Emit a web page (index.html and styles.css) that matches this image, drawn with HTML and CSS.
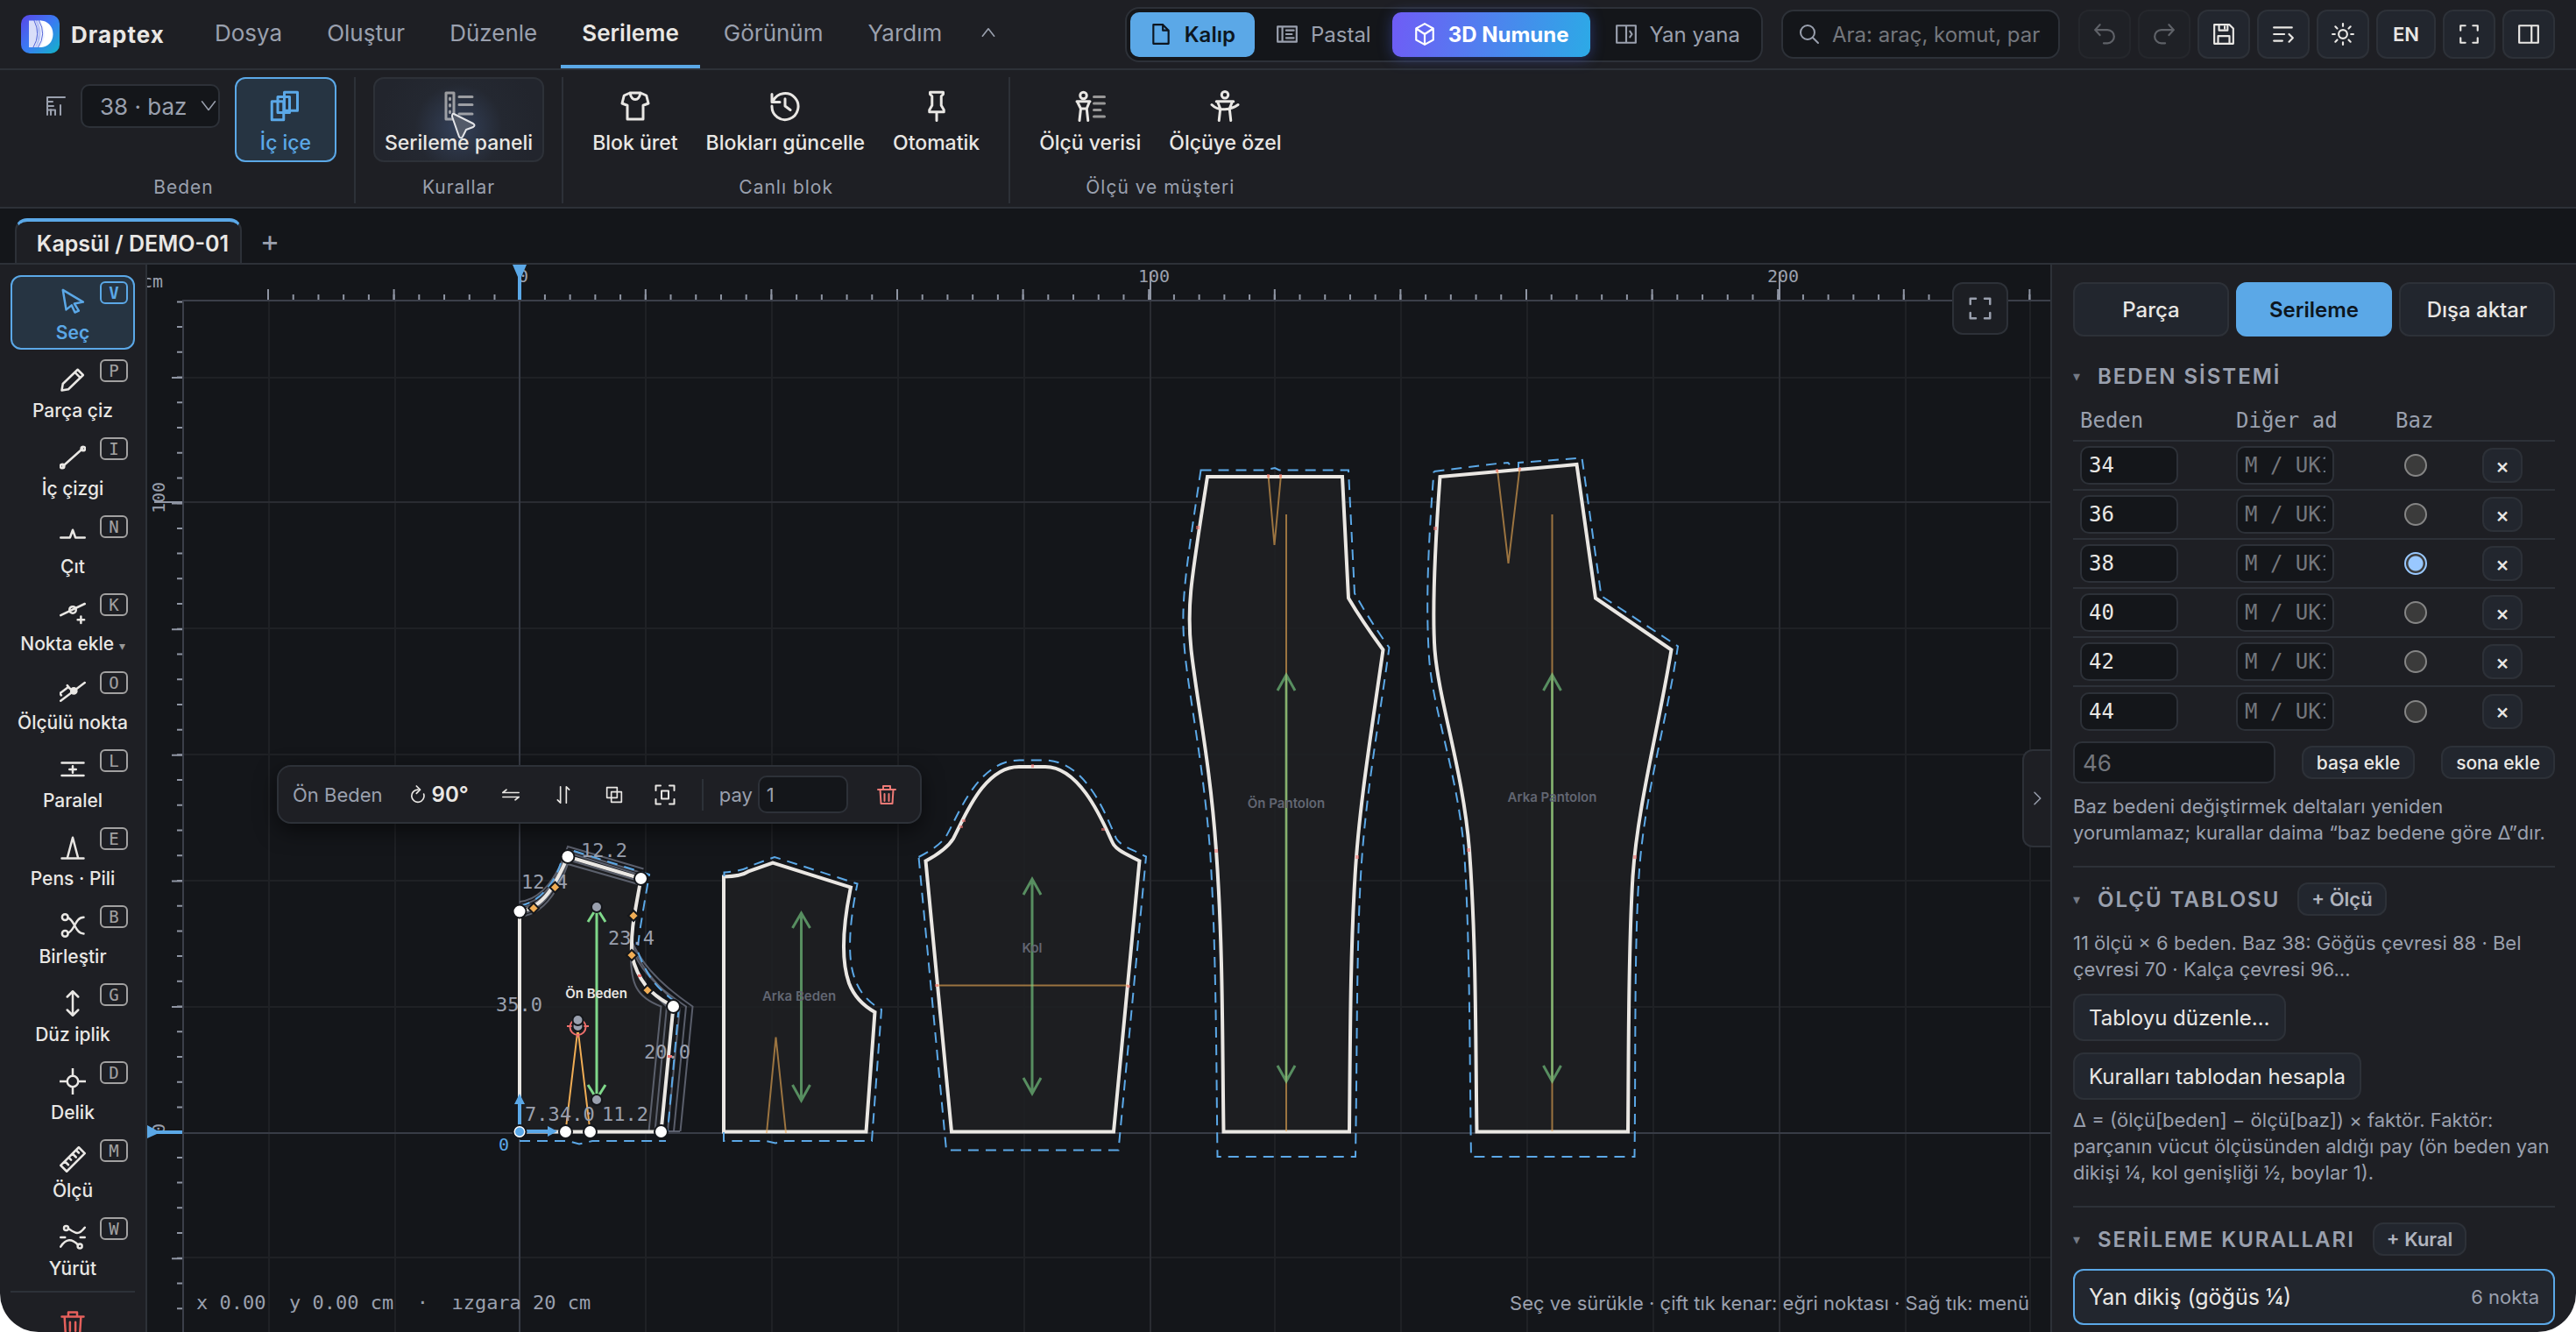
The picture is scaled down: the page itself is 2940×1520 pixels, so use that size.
FILE: index.html
```html
<!DOCTYPE html>
<html lang="tr">
<head>
<meta charset="utf-8">
<title>Draptex</title>
<link rel="stylesheet" href="styles.css">
</head>
<body>
<svg class="sprite" aria-hidden="true">
  <symbol id="i-up" viewBox="0 0 24 24"><path d="M4 17l8-10 8 10"/></symbol>
  <symbol id="i-file" viewBox="0 0 24 24"><path d="M4 2h10l6 6v14H4zM14 2v6h6"/></symbol>
  <symbol id="i-marker" viewBox="0 0 24 24"><path d="M2 4h20v16H2zM7 4v16M11 8h8M11 12h6M11 16h8"/></symbol>
  <symbol id="i-cube" viewBox="0 0 24 24"><path d="M12 1l9 5v12l-9 5-9-5V6zM3 6l9 6 9-6M12 12v11"/></symbol>
  <symbol id="i-split" viewBox="0 0 24 24"><path d="M2 3h20v18H2zM12 3v18M16 9l2 3-2 3"/></symbol>
  <symbol id="i-search" viewBox="0 0 24 24"><circle cx="10" cy="10" r="8"/><path d="M16 16l6 6"/></symbol>
  <symbol id="i-undo" viewBox="0 0 24 24"><path d="M7 2L2 7.500l5 5.500M2 7.500h13a6.800 6.800 0 0 1 0 14h-4"/></symbol>
  <symbol id="i-redo" viewBox="0 0 24 24"><path d="M17 2l5 5.500-5 5.500M22 7.500H9a6.800 6.800 0 0 0 0 14h4"/></symbol>
  <symbol id="i-save" viewBox="0 0 24 24"><path d="M2 2h16l4 4v16H2zM7 2v6h9V2M6 22v-8h12v8M13 4v2"/></symbol>
  <symbol id="i-lines" viewBox="0 0 24 24"><path d="M2 5h19M2 12h11M2 19h9M18 12l4 4-4 4"/></symbol>
  <symbol id="i-sun" viewBox="0 0 24 24"><circle cx="12" cy="12" r="4.500"/><path d="M12 1v2.500M12 20.500V23M1 12h2.500M20.500 12H23M4 4l2 2M18 18l2 2M4 20l2-2M18 6l2-2"/></symbol>
  <symbol id="i-full" viewBox="0 0 24 24"><path d="M3 8V3h5M16 3h5v5M21 16v5h-5M8 21H3v-5"/></symbol>
  <symbol id="i-panel" viewBox="0 0 24 24"><path d="M2 3h20v18H2zM15 3v18"/></symbol>
  <symbol id="i-sizes" viewBox="0 0 24 24"><path d="M2 22V2h20M2 7h6M2 12h7M6 22v-6M11 22v-5M17 22V11M2 16.500h9V22"/></symbol>
  <symbol id="i-down" viewBox="0 0 24 24"><path d="M2 5l10 13L22 5"/></symbol>
  <symbol id="i-nest" viewBox="0 0 24 24"><path d="M1.500 8.500h9v14h-9zM6 5h9v12H6zM11 1.500h10v14H11z"/></symbol>
  <symbol id="i-rules" viewBox="0 0 24 24"><path d="M2 2h6v20H2zM12 5h10M12 11h10M12 18h10M5 6v1M5 11v1M5 16v1"/></symbol>
  <symbol id="i-shirt" viewBox="0 0 24 24"><path d="M8 2h8l4.500 2L22 10l-4 1.500V22H6V11.500L2 10l1.500-6zM8 2q1 5 4 5t4-5"/></symbol>
  <symbol id="i-history" viewBox="0 0 24 24"><path d="M2 3v6h6M3 8a10 10 0 1 1-1 4M12 6.500V12l4 3"/></symbol>
  <symbol id="i-pin" viewBox="0 0 24 24"><path d="M7 1.500h10v1.500l-1.500 1.500v7L17.500 15v1.500h-11V15l2-3.500v-7L7 3zM12 16.500V23"/></symbol>
  <symbol id="i-bodydata" viewBox="0 0 24 24"><circle cx="7" cy="4" r="2.500"/><path d="M2 8.500h10M2.500 9l2.500 5-1 9M11.500 9L9.500 14l1 9M5 14h4.500"/><path class="dim" d="M15 5h8M15 10h8M15 15h5M15 20h8"/></symbol>
  <symbol id="i-bodyfit" viewBox="0 0 24 24"><circle cx="12" cy="3.500" r="2.500"/><path d="M5.500 8.500h13M6.500 9l2 5-1 9M17.500 9l-2 5 1 9M2 11q4 4 10 3.500T22 11"/></symbol>
  <symbol id="i-select" viewBox="0 0 24 24"><path d="M3 1.500l18.500 11-8 1.500 4 6.500-3.500 1.500-3-6.500-5 4z"/></symbol>
  <symbol id="i-pencil" viewBox="0 0 24 24"><path d="M2 22l1-6L16.500 3l5 5L8 21zM14 5.500l5 5"/></symbol>
  <symbol id="i-line" viewBox="0 0 24 24"><path d="M3 20L21 4"/><circle cx="2.500" cy="20" r="1.800"/><circle cx="21.500" cy="4" r="1.800"/></symbol>
  <symbol id="i-notch" viewBox="0 0 24 24"><path d="M1 14h8.500L12 7l2.500 7H23"/></symbol>
  <symbol id="i-addpt" viewBox="0 0 24 24"><path d="M1 14.500L23 4M19.500 15.500v6M16.500 18.500h6"/><circle cx="12" cy="9.500" r="3"/></symbol>
  <symbol id="i-measpt" viewBox="0 0 24 24"><path d="M1 20.500L23 4M0 14l8-6M-1 12.500l2.500 3M7 6.500l2.500 3"/><circle cx="13" cy="11.500" r="2.500" class="solid"/></symbol>
  <symbol id="i-parallel" viewBox="0 0 24 24"><path d="M2 6h20M2 17.500h20M12 9v6M9 12h6"/></symbol>
  <symbol id="i-dart" viewBox="0 0 24 24"><path d="M2 22h20M7 22l5-19 5 19"/></symbol>
  <symbol id="i-join" viewBox="0 0 24 24"><circle cx="5" cy="4.500" r="2.700"/><circle cx="5" cy="19.500" r="2.700"/><path d="M7.500 5C14 7 14 19.500 22 19.500M7.500 19C14 17 14 4.500 22 4.500"/></symbol>
  <symbol id="i-grain" viewBox="0 0 24 24"><path d="M12 1v22M7 6l5-5 5 5M7 18l5 5 5-5"/></symbol>
  <symbol id="i-drill" viewBox="0 0 24 24"><circle cx="12" cy="12" r="5"/><path d="M12 0v7M12 17v7M0 12h7M17 12h7"/></symbol>
  <symbol id="i-ruler" viewBox="0 0 24 24"><path d="M1 17.500L17.500 1 23 6.500 6.500 23zM5 14l3 3M8.500 10.500l2 2M12 7l3 3M15.500 4l2 2"/></symbol>
  <symbol id="i-walk" viewBox="0 0 24 24"><circle cx="6" cy="3.500" r="2"/><path d="M8 4c6 4 9 7 15-1M1 12h4M19 12h4M1 20.500C6 13 11 13 17 19"/><circle cx="18.500" cy="20" r="2"/></symbol>
  <symbol id="i-trash" viewBox="0 0 24 24"><path d="M2 6h20M8 6V2h8v4M4.500 6l1 16h13l1-16M9.500 11v8M14.500 11v8"/></symbol>
  <symbol id="i-fliph" viewBox="0 0 24 24"><path d="M1 9h22M1 9l5-4M1 15h22M23 15l-5 4"/></symbol>
  <symbol id="i-flipv" viewBox="0 0 24 24"><path d="M8 1v22M8 23l-4-4M16 1v22M16 1l4 4"/></symbol>
  <symbol id="i-copy" viewBox="0 0 24 24"><path d="M2 2h14v14H2zM8 8h14v14H8z"/></symbol>
  <symbol id="i-fit" viewBox="0 0 24 24"><path d="M1.500 7V1.500H7M17 1.500h5.500V7M22.500 17v5.500H17M7 22.500H1.500V17M8 7.500h8v9H8z"/></symbol>
  <symbol id="i-right" viewBox="0 0 24 24"><path d="M8 3l9 9-9 9"/></symbol>
</svg>

<div class="app">
  <header class="topbar">
    <a class="brand" href="#">
      <svg class="logo" viewBox="0 0 44 44" aria-hidden="true">
        <defs>
          <linearGradient id="lg" x1="0" y1="0" x2="1" y2="1"><stop offset="0" stop-color="#5a45e8"/><stop offset=".5" stop-color="#3a7bf2"/><stop offset="1" stop-color="#12b5c8"/></linearGradient>
        </defs>
        <rect width="44" height="44" rx="10" fill="url(#lg)"/>
        <path d="M9 6.500h8q6 15 0 30.500H9z" fill="#d9def9"/>
        <path d="M16 6.500h4q7 15.500 0 30.500h-4q8-15 0-30.500z" fill="#bcc6f5"/>
        <path d="M19 6.500h4q8 15.500 0 30.500h-5q8.500-15 1-30.500z" fill="#eef1ff"/>
        <path d="M22 6.500c8 0 14.500 6 14.500 15.500S30 37 22 37q9-15 0-30.500z" fill="#fff"/>
        <path d="M15 6.500q8 15.500-1 30.500M20.500 6.500q9 15.500-1 30.500" fill="none" stroke="#5567d8" stroke-width="1"/>
      </svg>
      <span>Draptex</span>
    </a>
    <nav class="menu">
      <button>Dosya</button><button>Oluştur</button><button>Düzenle</button><button class="on">Serileme</button><button>Görünüm</button><button>Yardım</button><button class="fold" aria-label="Şeridi daralt"><svg><use href="#i-up"/></svg></button>
    </nav>
    <div class="modes">
      <button class="kalip"><svg><use href="#i-file"/></svg>Kalıp</button>
      <button class="pastal"><svg><use href="#i-marker"/></svg>Pastal</button>
      <button class="three"><svg><use href="#i-cube"/></svg>3D Numune</button>
      <button class="side"><svg><use href="#i-split"/></svg>Yan yana</button>
    </div>
    <label class="search"><svg><use href="#i-search"/></svg><input type="text" aria-label="Ara" placeholder="Ara: araç, komut, parça…"></label>
    <div class="actions">
      <button disabled aria-label="Geri al"><svg><use href="#i-undo"/></svg></button>
      <button disabled aria-label="Yinele"><svg><use href="#i-redo"/></svg></button>
      <button aria-label="Kaydet"><svg><use href="#i-save"/></svg></button>
      <button aria-label="Komutlar"><svg><use href="#i-lines"/></svg></button>
      <button aria-label="Tema"><svg><use href="#i-sun"/></svg></button>
      <button class="lang">EN</button>
      <button aria-label="Tam ekran"><svg><use href="#i-full"/></svg></button>
      <button aria-label="Panel"><svg><use href="#i-panel"/></svg></button>
    </div>
  </header>

  <div class="ribbon">
    <section class="group first">
      <div class="tools">
        <label class="size"><svg><use href="#i-sizes"/></svg><span class="pick"><select aria-label="Beden"><option>38 · baz</option></select><svg><use href="#i-down"/></svg></span></label>
        <button class="tool on"><svg><use href="#i-nest"/></svg>İç içe</button>
      </div>
      <h2>Beden</h2>
    </section>
    <section class="group">
      <div class="tools"><button class="tool hover"><svg class="dim"><use href="#i-rules"/></svg>Serileme paneli
        <svg class="cursor" viewBox="0 0 30 32"><path d="M4 2l22 11q3 2 0 4l-8 3-4 8q-2 3-4 0L2 5q0-4 2-3z"/></svg></button></div>
      <h2>Kurallar</h2>
    </section>
    <section class="group">
      <div class="tools">
        <button class="tool"><svg><use href="#i-shirt"/></svg>Blok üret</button>
        <button class="tool"><svg><use href="#i-history"/></svg>Blokları güncelle</button>
        <button class="tool"><svg><use href="#i-pin"/></svg>Otomatik</button>
      </div>
      <h2>Canlı blok</h2>
    </section>
    <section class="group">
      <div class="tools">
        <button class="tool"><svg><use href="#i-bodydata"/></svg>Ölçü verisi</button>
        <button class="tool"><svg><use href="#i-bodyfit"/></svg>Ölçüye özel</button>
      </div>
      <h2>Ölçü ve müşteri</h2>
    </section>
  </div>

  <div class="tabs"><button class="tab">Kapsül / DEMO-01</button><button class="add" aria-label="Yeni sekme">+</button></div>

  <div class="main">
    <aside class="rail">
      <button class="on"><svg><use href="#i-select"/></svg>Seç<kbd>V</kbd></button>
      <button><svg><use href="#i-pencil"/></svg>Parça çiz<kbd>P</kbd></button>
      <button><svg><use href="#i-line"/></svg>İç çizgi<kbd>I</kbd></button>
      <button><svg><use href="#i-notch"/></svg>Çıt<kbd>N</kbd></button>
      <button><svg><use href="#i-addpt"/></svg><span>Nokta ekle <small>▾</small></span><kbd>K</kbd></button>
      <button><svg><use href="#i-measpt"/></svg>Ölçülü nokta<kbd>O</kbd></button>
      <button><svg><use href="#i-parallel"/></svg>Paralel<kbd>L</kbd></button>
      <button><svg><use href="#i-dart"/></svg>Pens · Pili<kbd>E</kbd></button>
      <button><svg><use href="#i-join"/></svg>Birleştir<kbd>B</kbd></button>
      <button><svg><use href="#i-grain"/></svg>Düz iplik<kbd>G</kbd></button>
      <button><svg><use href="#i-drill"/></svg>Delik<kbd>D</kbd></button>
      <button><svg><use href="#i-ruler"/></svg>Ölçü<kbd>M</kbd></button>
      <button><svg><use href="#i-walk"/></svg>Yürüt<kbd>W</kbd></button>
      <hr>
      <button class="danger" aria-label="Sil"><svg><use href="#i-trash"/></svg></button>
    </aside>

    <main class="stage">
      <svg class="board" viewBox="168 302 2172 1218" preserveAspectRatio="xMinYMin slice">
        <g class="grid">
          <path d="M307 344V1520M451 344V1520M737 344V1520M881 344V1520M1025 344V1520M1169 344V1520M1455 344V1520M1599 344V1520M1743 344V1520M1887 344V1520M2175 344V1520M2317 344V1520M210 431H2340M210 717H2340M210 861H2340M210 1005H2340M210 1149H2340M210 1435H2340"/>
          <path class="major" d="M1313 344V1520M2031 344V1520M210 573H2340"/>
          <path class="axis" d="M593 344V1520M210 1293H2340"/>
        </g>
        <g class="ruler">
          <path class="edge" d="M209 1520V343H2340"/>
          <path class="tick" stroke-width="6" stroke-dasharray="2 26.720" d="M305 339H2340"/>
          <path class="tick" stroke-width="12" stroke-dasharray="2 141.600" d="M305 336H2340"/>
          <path class="tick" stroke-width="32" d="M592 326h2M1312 326h2M2030 326h2"/>
          <path class="tick" stroke-width="6" stroke-dasharray="2 26.720" d="M205 343.400V1520"/>
          <path class="tick" stroke-width="12" stroke-dasharray="2 141.600" d="M202 430V1520"/>
          <path class="tick" stroke-width="32" d="M192 572v2"/>
          <text x="162" y="328">cm</text>
          <text x="597" y="322" text-anchor="middle">0</text>
          <text x="1317" y="322" text-anchor="middle">100</text>
          <text x="2035" y="322" text-anchor="middle">200</text>
          <text transform="translate(188 568) rotate(-90)" text-anchor="middle">100</text>
          <text transform="translate(188 1288) rotate(-90)" text-anchor="middle">0</text>
          <path class="mark" d="M585 302h16l-6 14v26h-4v-26zM168 1284l11 6h29v4h-29l-11 5z"/>
        </g>

        <g class="piece idle">
          <path class="body" d="M826 1291.500V1000.500Q846 1000 855 994L882 984.500 971 1012.500Q956 1085 969 1122 977 1143 998.500 1155L988.500 1291.500z"/>
          <path class="seam" d="M826.500 1000V995.500Q848 994 857 988L884 978 978.500 1008.500Q963 1085 976 1118 984 1140 1006 1152L995 1302H896L885 1304.500 874 1302H826V1292"/>
          <path class="dart" d="M875 1293L885.500 1183.500 897 1293"/>
          <path class="grain" d="M914.500 1042V1256M904.500 1059l10-17 10 17M904.500 1238l10 18 10-18"/>
          <text x="912" y="1142">Arka Beden</text>
        </g>
        <g class="piece idle">
          <path class="body" d="M1086 1291.500L1056.500 982.500Q1080 970 1088 957C1100 935 1122 874 1164 875H1192C1232 874 1258 936 1269 960 1273 970 1284 974 1300.500 982.500L1271 1291.500z"/>
          <path class="seam" d="M1048.500 978Q1072 966 1080 954C1094 930 1116 867 1164 867.500H1192C1240 868 1262 930 1274 957 1280 966 1290 968 1308 977.500L1276.500 1312.500H1080z"/>
          <path class="dart" d="M1069 1124.500H1288"/>
          <path class="grain" d="M1178 1003V1248M1168 1021l10-18 10 18M1168 1230l10 18 10-18"/>
          <path class="nick" d="M1177 872h3v4h-3zM1098 935h4v3h-4zM1095 942h4v3h-4zM1257 945h4v3h-4zM1067 1123h4v3h-4zM1286 1124h4v3h-4z"/>
          <text x="1178" y="1087">Kol</text>
        </g>
        <g class="piece idle">
          <path class="body" d="M1378 544H1532L1539 682.500Q1554 708 1578.500 741.500C1566 830 1551 920 1546.500 1000 1541 1090 1541 1190 1540 1291.500H1396.500C1395 1190 1396 1080 1388 970 1381 870 1366 800 1359.500 741.500 1354 690 1360 660 1378 544z"/>
          <path class="seam" d="M1370.500 536.500H1443L1455 534 1460 536.500H1539L1546 677Q1562 706 1585.500 739C1573 830 1558 910 1553 1000 1548 1090 1549 1200 1547 1320H1389.500C1388 1200 1388 1080 1381 970 1373 870 1358 800 1352.500 747 1347 690 1352 660 1370.500 536.500z"/>
          <path class="dart" d="M1447.500 542L1454.500 622 1462 542M1468 587V1291"/>
          <path class="grain" d="M1468 770V1234M1458 788l10-18 10 18M1458 1216l10 18 10-18"/>
          <path class="nick" d="M1446 541h3v4h-3zM1460 541h3v4h-3zM1365 600h4v4h-4zM1386 969h4v4h-4zM1547 976h4v4h-4z"/>
          <text x="1468" y="922">Ön Pantolon</text>
        </g>
        <g class="piece idle">
          <path class="body" d="M1643.500 544L1799.500 530 1821 682.500 1907.500 741.500C1893 830 1869 920 1863.500 1000 1858 1090 1859 1190 1858 1291.500H1685.500C1684 1190 1685 1080 1677 970 1670 880 1642 800 1637.500 741.500 1634 690 1638 620 1643.500 544z"/>
          <path class="seam" d="M1636.500 538L1709 529 1721 528 1723 530M1733 534V528L1805.500 522.500 1827.500 680 1915 737.500C1901 830 1876 910 1870.500 1000 1865 1090 1867 1200 1865.500 1320H1679C1677 1200 1678 1080 1671 970 1663 880 1635 810 1631 750 1627 690 1630 620 1636.500 538"/>
          <path class="dart" d="M1709 536L1721.500 643 1734.500 534M1771.500 587V1291"/>
          <path class="grain" d="M1771.500 770V1234M1761.500 788l10-18 10 18M1761.500 1216l10 18 10-18"/>
          <path class="nick" d="M1707 535h3v4h-3zM1733 533h3v4h-3zM1636 601h4v4h-4zM1674 968h4v4h-4zM1864 976h4v4h-4z"/>
          <text x="1771.500" y="915">Arka Pantolon</text>
        </g>

        <g class="piece live">
          <path class="fill" d="M593 1291.500V1040C620 1036 634 1010 648 977.500L731.500 1002.500C724 1045 720 1060 721 1090 728 1118 740 1134 768.500 1148.500L754.500 1291.500z"/>
          <path class="nest" d="M593 1029C622 1026 638 995 648 966L734.500 991.500M593 1033C622 1029 636 1003 648 970L732 996M593 1036C622 1033 636 1006 648 973L732 999M593 1043C618 1040 634 1016 648 981L732 1006M593 1046C618 1044 636 1020 648 986L732 1010M720 1072C730 1095 746 1118 790.500 1148.500L776.500 1291M720 1078C728 1104 746 1124 783 1148.500L769 1291M720 1085C724 1112 742 1132 761 1148.500L747.500 1291M720 1090C720 1122 726 1138 754.500 1148.500L740.500 1291"/>
          <path class="nest" d="M720 1075C730 1100 746 1122 776 1148.500L762 1291H776"/>
          <path class="seam" d="M593 1034C614 1030 632 1010 640 985M655 971L741 998C734 1040 728 1070 728 1086 738 1112 748 1128 775 1146L762 1291M593 1302H648L661 1305.500 676 1302H760"/>
          <path class="line" d="M593 1291.500V1040C620 1036 634 1010 648 977.500L731.500 1002.500C724 1045 720 1060 721 1090 728 1118 740 1134 768.500 1148.500L754.500 1291.500z"/>
          <path class="dart" d="M645.500 1291L659.500 1174 673.500 1291"/>
          <path class="grain" d="M681 1040V1250M671 1052l10-16 10 16M671 1238l10 16 10-16"/>
          <text class="name" x="680.500" y="1139">Ön Beden</text>
          <g class="dims">
            <text x="663" y="978">12.2</text><text x="595" y="1014">12.4</text><text x="694" y="1078">23.4</text><text x="566" y="1154">35.0</text><text x="735" y="1208">20.0</text><text x="599" y="1279">7.3</text><text x="639" y="1279">4.0</text><text x="687" y="1279">11.2</text>
          </g>
          <path class="nick" d="M728 1112h4v3h-4zM762 1204h5v3h-5z"/>
          <path class="target" d="M647 1171h6M666 1171h6M659.500 1180v4"/><circle class="target" cx="659.500" cy="1172" r="9"/>
          <g class="knob"><circle cx="681" cy="1035" r="6"/><circle cx="681" cy="1255" r="6"/><circle cx="659.500" cy="1171" r="6"/><circle cx="659.500" cy="1164" r="6"/></g>
          <g class="ctrl"><path d="M609 1030.500l6 6-6 6-6-6zM633.500 1006.500l6 6-6 6-6-6zM723 1039l6 6-6 6-6-6zM721 1084l6 6-6 6-6-6zM739 1124l6 6-6 6-6-6z"/></g>
          <g class="origin"><path d="M591 1291V1260h-4l6-12 6 12h-4v29h30v-4l11 6-11 6v-4h-32z"/></g>
          <g class="vertex"><circle cx="593" cy="1040" r="7.500"/><circle cx="648" cy="977.500" r="7.500"/><circle cx="731.500" cy="1002.500" r="7.500"/><circle cx="768.500" cy="1148.500" r="7.500"/><circle cx="754.500" cy="1291.500" r="7.500"/><circle cx="673.500" cy="1291.500" r="7.500"/><circle cx="645.500" cy="1291.500" r="7.500"/><circle cx="593" cy="1291.500" r="7.500"/></g>
          <circle class="zero" cx="593" cy="1291.500" r="5"/>
          <text class="zlabel" x="569" y="1313">0</text>
        </g>
      </svg>

      <div class="float">
        <span>Ön Beden</span>
        <button class="rot"><svg viewBox="0 0 24 24"><path d="M12 5a8.500 8.500 0 1 0 8 6M10 0l5 5-5 5"/></svg>90°</button>
        <button aria-label="Yatay çevir"><svg><use href="#i-fliph"/></svg></button>
        <button aria-label="Dikey çevir"><svg><use href="#i-flipv"/></svg></button>
        <button class="snug" aria-label="Çoğalt"><svg><use href="#i-copy"/></svg></button>
        <button class="snug" aria-label="Sığdır"><svg class="big"><use href="#i-fit"/></svg></button>
        <i></i>
        <label>pay <input value="1"></label>
        <button class="del" aria-label="Sil"><svg class="big"><use href="#i-trash"/></svg></button>
      </div>
      <button class="expand" aria-label="Tam ekran"><svg><use href="#i-full"/></svg></button>
      <button class="handle" aria-label="Paneli kapat"><svg><use href="#i-right"/></svg></button>
      <div class="status"><span class="coords">x 0.00&nbsp; y 0.00 cm&nbsp; ·&nbsp; ızgara 20 cm</span><span>Seç ve sürükle · çift tık kenar: eğri noktası · Sağ tık: menü</span></div>
    </main>

    <aside class="panel">
      <div class="ptabs"><button>Parça</button><button class="on">Serileme</button><button>Dışa aktar</button></div>
      <section>
        <h3><b>▾</b>BEDEN SİSTEMİ</h3>
        <table>
          <thead><tr><th>Beden</th><th>Diğer ad</th><th>Baz</th><th></th></tr></thead>
          <tbody>
            <tr><td><input value="34" aria-label="Beden"></td><td><input placeholder="M / UK12" aria-label="Diğer ad"></td><td><input type="radio" name="baz" aria-label="Baz 34"></td><td><button>×</button></td></tr>
            <tr><td><input value="36" aria-label="Beden"></td><td><input placeholder="M / UK12" aria-label="Diğer ad"></td><td><input type="radio" name="baz" aria-label="Baz 36"></td><td><button>×</button></td></tr>
            <tr><td><input value="38" aria-label="Beden"></td><td><input placeholder="M / UK12" aria-label="Diğer ad"></td><td><input type="radio" name="baz" aria-label="Baz 38" checked></td><td><button>×</button></td></tr>
            <tr><td><input value="40" aria-label="Beden"></td><td><input placeholder="M / UK12" aria-label="Diğer ad"></td><td><input type="radio" name="baz" aria-label="Baz 40"></td><td><button>×</button></td></tr>
            <tr><td><input value="42" aria-label="Beden"></td><td><input placeholder="M / UK12" aria-label="Diğer ad"></td><td><input type="radio" name="baz" aria-label="Baz 42"></td><td><button>×</button></td></tr>
            <tr><td><input value="44" aria-label="Beden"></td><td><input placeholder="M / UK12" aria-label="Diğer ad"></td><td><input type="radio" name="baz" aria-label="Baz 44"></td><td><button>×</button></td></tr>
          </tbody>
        </table>
        <div class="addrow"><input placeholder="46" aria-label="Yeni beden"><button class="mini">başa ekle</button><button class="mini">sona ekle</button></div>
        <p>Baz bedeni değiştirmek deltaları yeniden yorumlamaz; kurallar daima “baz bedene göre Δ”dır.</p>
      </section>
      <section>
        <h3><b>▾</b>ÖLÇÜ TABLOSU<button class="mini">+ Ölçü</button></h3>
        <p>11 ölçü × 6 beden. Baz 38: Göğüs çevresi 88 · Bel çevresi 70 · Kalça çevresi 96…</p>
        <button class="wide">Tabloyu düzenle…</button>
        <button class="wide">Kuralları tablodan hesapla</button>
        <p class="note">Δ = (ölçü[beden] − ölçü[baz]) × faktör. Faktör: parçanın vücut ölçüsünden aldığı pay (ön beden yan dikişi ¼, kol genişliği ½, boylar 1).</p>
      </section>
      <section>
        <h3><b>▾</b>SERİLEME KURALLARI<button class="mini">+ Kural</button></h3>
        <button class="rule"><span>Yan dikiş (göğüs ¼)</span><small>6 nokta</small></button>
      </section>
    </aside>
  </div>
</div>
</body>
</html>
```
FILE: styles.css
```css
:root {
  --accent: #5ba8e7;
  --bg: #1e1f24;
  --deep: #14161a;
  --line: #2d3138;
  --btn: #22262e;
  --text: #e9e7e4;
  --muted: #9aa0ae;
  --mono: "DejaVu Sans Mono", monospace;
}
* { box-sizing: border-box; }
html { background: #fff; }
body { margin: 0; font-family: Inter, sans-serif; font-size: 24px; color: var(--text); }
button, input, select { font: inherit; color: inherit; margin: 0; }
button { background: none; border: 0; padding: 0; display: flex; align-items: center; justify-content: center; white-space: nowrap; }
svg { fill: none; stroke: currentColor; stroke-width: 2; flex: none; stroke-linecap: round; stroke-linejoin: round; }
.sprite { position: absolute; width: 0; height: 0; }
.dim { opacity: .6; }
.solid { fill: currentColor; }
input { min-width: 0; }
input::placeholder { color: #74777d; opacity: 1; }

.app { height: 100vh; display: flex; flex-direction: column; background: var(--bg); border-radius: 0 0 44px 44px; overflow: hidden; }

/* top bar */
.topbar { display: flex; align-items: center; height: 80px; padding: 0 24px; border-bottom: 2px solid var(--line); flex: none; }
.brand { display: flex; align-items: center; gap: 13px; color: inherit; text-decoration: none; font-weight: 700; font-size: 26px; letter-spacing: 1px; width: 197px; }
.logo { width: 44px; height: 44px; stroke: none; }
.menu { display: flex; gap: 3px; align-self: stretch; }
.menu button { padding: 0 24px; font-size: 26px; color: var(--muted); border-bottom: 4px solid transparent; }
.menu button.on { color: var(--text); font-weight: 600; border-color: var(--accent); }
.menu .fold { padding: 0 16px; }
.menu .fold svg { width: 20px; height: 20px; }
.modes { display: flex; gap: 4px; margin-left: auto; height: 63px; padding: 4px; background: var(--deep); border: 2px solid var(--line); border-radius: 16px; }
.modes button { gap: 14px; padding: 0 24px; color: var(--muted); border-radius: 10px; }
.modes svg { width: 26px; height: 26px; }
.modes .kalip { background: var(--accent); color: #0d1620; font-weight: 600; padding: 0 22px; }
.modes .pastal { padding: 0 20px; }
.modes .side { padding: 0 20px 0 24px; }
.modes .three { background: linear-gradient(100deg, #6f5cf6, #2caae6); color: #fff; font-weight: 700; box-shadow: 0 2px 16px #4a63e366; }
.search { display: flex; align-items: center; gap: 14px; width: 318px; height: 56px; margin: 0 21px; padding: 0 20px 0 18px; background: var(--deep); border: 2px solid var(--line); border-radius: 14px; color: var(--muted); }
.search svg { width: 24px; height: 24px; }
.search input { flex: 1; width: 0; background: none; border: 0; padding: 0; outline: 0; }
.actions { display: flex; gap: 8px; }
.actions button { width: 60px; height: 56px; background: var(--btn); border: 2px solid var(--line); border-radius: 12px; }
.actions button:disabled { background: #1f2126; border-color: #25272c; color: #5f6268; }
.actions .lang { width: 68px; font-weight: 600; font-size: 22px; }
.actions svg { width: 26px; height: 26px; }

/* ribbon */
.ribbon { display: flex; height: 158px; padding: 8px 0 4px; border-bottom: 2px solid var(--line); flex: none; }
.group { display: flex; flex-direction: column; padding: 0 20px; border-right: 2px solid var(--line); }
.group:last-child { border: 0; }
.group.first { padding-left: 35px; }
.tools { display: flex; gap: 6px; height: 97px; }
.group h2 { margin: 16px 0 0; font-size: 21px; font-weight: 400; line-height: 26px; letter-spacing: 1px; color: var(--muted); text-align: center; }
.tool { position: relative; flex-direction: column; gap: 10px; padding: 6px 11px 0; border: 2px solid transparent; border-radius: 12px; font-size: 23px; font-weight: 500; line-height: 28px; }
.tool > svg { width: 36px; height: 36px; }
.tool.on { color: var(--accent); background: #263442; border-color: var(--accent); width: 116px; }
.tool.hover { background: radial-gradient(circle at 50% 60%, #34415a, #242831 50px, #22252d 90px); border-color: var(--line); }
.tool .cursor { position: absolute; left: 86px; top: 38px; width: 30px; height: 32px; fill: #535a68; stroke: #e4e5e8; }
.size { display: flex; align-items: center; gap: 16px; height: 66px; margin-right: 11px; color: var(--muted); }
.size > svg { width: 24px; height: 24px; margin-left: 17px; }
.pick { position: relative; width: 159px; height: 50px; }
.pick select { appearance: none; width: 100%; height: 100%; padding: 0 20px; font-size: 26px; background: var(--deep); border: 2px solid var(--line); border-radius: 10px; }
.pick svg { position: absolute; right: 4px; top: 16px; width: 18px; height: 18px; }

/* document tabs */
.tabs { display: flex; height: 64px; padding: 11px 17px 0; background: var(--deep); border-bottom: 2px solid var(--line); flex: none; }
.tab { width: 259px; padding: 2px 0 0 10px; font-size: 25px; font-weight: 600; background: var(--bg); border: 2px solid var(--line); border-top: 4px solid var(--accent); border-bottom: 0; border-radius: 14px 14px 0 0; }
.add { width: 64px; font-size: 34px; color: var(--muted); }

.main { flex: 1; display: flex; min-height: 0; }

/* tool rail */
.rail { width: 168px; padding: 12px 12px 0; border-right: 2px solid var(--line); display: flex; flex-direction: column; gap: 4px; overflow: hidden; flex: none; }
.rail button { position: relative; flex: none; flex-direction: column; gap: 8px; height: 85px; padding-top: 8px; border: 2px solid transparent; border-radius: 12px; font-size: 21px; font-weight: 500; line-height: 26px; }
.rail svg { width: 30px; height: 30px; }
.rail .on { color: var(--accent); background: #263442; border-color: var(--accent); font-weight: 600; }
.rail kbd { position: absolute; right: 6px; top: 5px; width: 32px; height: 26px; border: 2px solid; border-radius: 6px; font: 19px/22px var(--mono); text-align: center; opacity: .65; }
.rail .on kbd { opacity: 1; font-weight: 700; }
.rail small { font-size: 14px; opacity: .6; }
.rail hr { width: 100%; margin: 2px 0 0; border: 0; border-top: 2px solid var(--line); flex: none; }
.rail .danger { color: #e5605c; justify-content: flex-start; padding-top: 14px; }

/* drawing board */
.stage { position: relative; flex: 1; min-width: 0; background: var(--deep); overflow: hidden; }
.board { display: block; width: 100%; height: 100%; stroke-linecap: butt; stroke-linejoin: miter; }
.grid { stroke: #1f2125; }
.major { stroke: #2a2c32; }
.axis { stroke: #383c46; }
.edge { stroke: #3b3f49; }
.tick { stroke: #8f95a3; }
.board text { stroke: none; fill: var(--muted); }
.ruler text { font: 20px var(--mono); }
.mark { fill: var(--accent); stroke: none; }
.body { fill: #1e2023d9; stroke: #eae7e3; stroke-width: 4; }
.fill { fill: #1e2023d9; stroke: none; }
.line { stroke: #eae7e3; stroke-width: 4; }
.seam { stroke: var(--accent); stroke-dasharray: 12 8; }
.dart { stroke: #f0ad55; }
.grain { stroke: #7fd88a; stroke-width: 3; }
.nick { fill: #ee6f6c; stroke: none; }
.idle .dart, .idle .grain { opacity: .6; }
.idle .nick { opacity: .6; }
.idle text { font: 600 15px Inter, sans-serif; text-anchor: middle; fill: #626672; }
.board .name { font: 600 15px Inter, sans-serif; text-anchor: middle; fill: var(--text); }
.nest { stroke: #6c7180; opacity: .8; }
.dims text { font: 22px var(--mono); }
.target { stroke: #ee6f6c; }
.knob { fill: var(--muted); stroke: var(--deep); }
.ctrl { fill: #f0ad55; stroke: var(--deep); }
.vertex { fill: #fff; stroke: var(--deep); }
.origin { fill: var(--accent); stroke: none; }
.zero { fill: var(--accent); stroke: none; }
.board .zlabel { font: 20px var(--mono); fill: var(--accent); }

.float { position: absolute; left: 148px; top: 571px; width: 736px; height: 67px; display: flex; align-items: center; padding: 0 16px; background: var(--bg); border: 2px solid var(--line); border-radius: 16px; box-shadow: 0 8px 24px #0008; font-size: 22px; color: var(--muted); }
.float button { height: 48px; padding: 0 20px; color: var(--text); }
.float .snug { padding: 0 18px; }
.float svg { width: 20px; height: 22px; }
.float .big { width: 24px; height: 24px; }
.float .rot { gap: 6px; padding: 0 18px 0 30px; font-size: 24px; font-weight: 600; }
.float i { width: 2px; height: 36px; margin: 0 18px 0 12px; background: var(--line); }
.float label { display: flex; align-items: center; gap: 6px; }
.float input { width: 103px; height: 43px; padding: 0 8px; background: var(--deep); border: 2px solid var(--line); border-radius: 10px; color: var(--muted); }
.float .del { color: #ee7a76; padding: 0 10px; margin-left: auto; }
.expand { position: absolute; right: 48px; top: 20px; width: 64px; height: 60px; background: #1c1e23; border: 2px solid var(--line); border-radius: 12px; color: var(--muted); }
.expand svg { width: 30px; height: 30px; }
.handle { position: absolute; right: 0; top: 553px; width: 32px; height: 112px; background: var(--bg); border: 2px solid var(--line); border-right: 0; border-radius: 12px 0 0 12px; color: var(--muted); }
.handle svg { width: 18px; height: 18px; }
.status { position: absolute; left: 56px; right: 24px; bottom: 18px; display: flex; justify-content: space-between; align-items: center; font-size: 22px; line-height: 30px; color: var(--muted); }
.coords { font-family: var(--mono); }

/* side panel */
.panel { width: 600px; padding: 20px 24px 0; border-left: 2px solid var(--line); overflow: hidden; flex: none; }
.panel button { background: var(--btn); border: 2px solid var(--line); border-radius: 12px; }
.ptabs { display: grid; grid-template-columns: repeat(3, 1fr); gap: 8px; }
.ptabs button { height: 62px; font-weight: 500; }
.ptabs button.on { background: var(--accent); border-color: var(--accent); color: #0d1620; font-weight: 600; }
.panel section { padding-bottom: 23px; border-bottom: 2px solid var(--line); }
.panel h3 { display: flex; align-items: center; height: 40px; margin: 16px 0 12px; font-size: 24px; font-weight: 600; letter-spacing: 2px; color: var(--muted); }
.ptabs + section h3 { margin: 25px 0 8px; }
.panel h3 b { width: 28px; font-size: 16px; font-weight: 400; opacity: .7; letter-spacing: 0; }
.panel .mini { height: 38px; padding: 0 14px; font-size: 22px; font-weight: 500; letter-spacing: 0; }
.panel h3 .mini { margin-left: 20px; font-weight: 600; color: #b0b4be; }
table { width: 100%; table-layout: fixed; border-collapse: collapse; font-family: var(--mono); }
th { height: 46px; padding: 0 8px; font-weight: 400; text-align: left; color: var(--muted); }
td { height: 56px; padding: 0 8px; border-top: 2px solid var(--line); }
th:nth-child(1) { width: 178px; }
th:nth-child(2) { width: 182px; }
th:nth-child(3) { width: 92px; }
td input { display: block; width: 112px; height: 44px; padding: 0 8px; background: var(--deep); border: 2px solid var(--line); border-radius: 10px; }
td input[type=radio] { appearance: none; width: 26px; height: 26px; margin-left: 10px; padding: 0; background: #3b3b3b; border: 2px solid #858585; border-radius: 50%; }
td input[type=radio]:checked { border-color: #99c8ff; background: radial-gradient(circle, #99c8ff 8px, #3b3b3b 9px); }
td button { width: 46px; height: 40px; margin-left: 7px; font: 500 24px Inter, sans-serif; }
.addrow { display: flex; align-items: center; justify-content: space-between; margin-top: 7px; }
.addrow input { width: 231px; height: 48px; padding: 0 9px; font-size: 26px; background: var(--deep); border: 2px solid var(--line); border-radius: 10px; }
.addrow .mini { font-size: 21px; padding: 0 15px; }
.panel p { margin: 11px 0 0; font-size: 22px; line-height: 30px; color: var(--muted); }
.panel h3 + p { margin-top: 15px; }
.panel .note { margin-top: 8px; }
.panel .wide { height: 54px; margin-top: 13px; padding: 0 16px; }
.panel .rule { width: 100%; height: 64px; margin-top: 14px; padding: 0 16px; justify-content: space-between; border-color: var(--accent); font-size: 25px; }
.rule small { font-size: 22px; color: var(--muted); }
```
